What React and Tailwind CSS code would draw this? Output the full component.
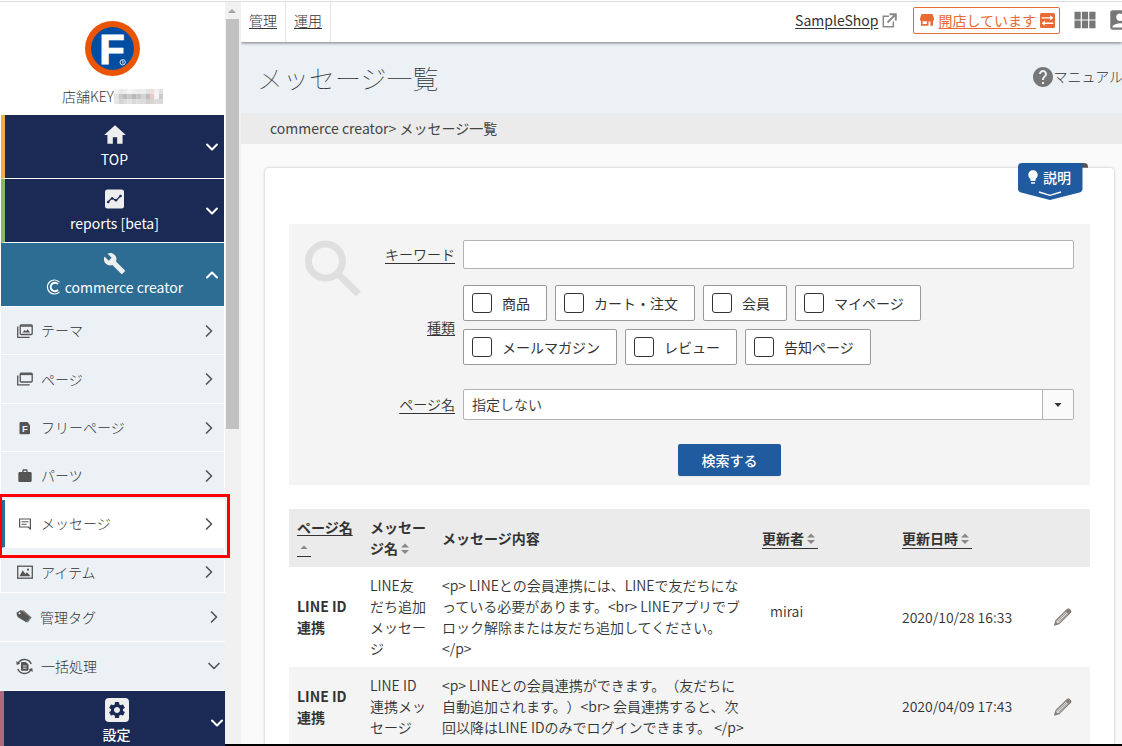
import React from "react";
import { ChevronDown, ChevronRight, ChevronUp } from "lucide-react";
import { MdAccountBox, MdBuild, MdHelp, MdHome, MdLightbulb, MdSettings, MdViewModule, MdWork } from "react-icons/md";

function Logo() {
  return (
    <svg className="size-[55px]" viewBox="0 0 54 54" aria-label="ロゴ">
      <circle cx="27" cy="27" r="27" fill="#ea5504" />
      <circle cx="27" cy="27" r="21" fill="#004ea2" />
      <text x="14" y="42" fontSize="41" fontWeight="700" fontFamily="Liberation Sans, sans-serif" fill="#fff" stroke="#fff" strokeWidth="1">F</text>
      <circle cx="37" cy="40.500" r="2.600" fill="none" stroke="#fff" strokeWidth=".8" />
      <path d="M36.200 39.300h1.600l-.8 1 .8 1h-1.600" fill="none" stroke="#fff" strokeWidth=".6" />
    </svg>
  );
}

const mosaic = [
  ["#f3f3f3", "#e9e9e9", "#eeeeee", "#f5f5f5", "#efefef", "#ececec", "#eeeeee", "#e3e3e3", "#f0dede", "#f2f2f2", "#dfdfdf"],
  ["#e4e4e4", "#c9c9c9", "#bcbcbc", "#c8c8c8", "#b9b9b9", "#c3c3c3", "#d2d2d2", "#bdbdbd", "#ecc8c8", "#f2f4f6", "#cbcbcb"],
  ["#e8e8e8", "#d6d6d6", "#dddddd", "#e3e3e3", "#d9d9d9", "#dddddd", "#dcdcdc", "#d0d0d0", "#d9d4d4", "#dcdcdc", "#d9d9d9"],
];

function MaskedKey() {
  return (
    <svg className="h-[15px] w-[49px]" viewBox="0 0 49 15" aria-label="非表示">
      {mosaic.map((row, r) => row.map((c, i) => <rect key={`${r}-${i}`} x={i * 4.5} y={r * 5} width="4.600" height="5" fill={c} />))}
    </svg>
  );
}

function ReportIcon() {
  return (
    <svg className="size-5" viewBox="0 0 20 20">
      <rect x="0" y="0.500" width="19" height="19" rx="2.500" fill="#eee" />
      <path d="M3 13l4-4 4 2.500 5-5" fill="none" stroke="#1b2a54" strokeWidth="1.200" />
      <g fill="#1b2a54"><circle cx="3.200" cy="13" r="1.300" /><circle cx="7.200" cy="9.500" r="1.300" /><circle cx="11" cy="11.200" r="1.300" /><circle cx="15.500" cy="7" r="1.300" /></g>
    </svg>
  );
}

function CreatorMark() {
  return (
    <svg className="h-4 w-[15px]" viewBox="0 0 15 16" fill="none" stroke="#fff">
      <path d="M13.500 3.200A7 7 0 1 0 13.500 12.800" strokeWidth="1.200" />
      <path d="M12 5.200A4.200 4.200 0 1 0 12 10.800" strokeWidth="1.900" />
    </svg>
  );
}

function ThemeIcon() {
  return (
    <svg className="size-4" viewBox="0 0 16 16" fill="none" stroke="#555">
      <path d="M.700 3.500v10.800h12" strokeWidth="1.300" />
      <rect x="3.200" y="1.800" width="12" height="9.700" rx="1" strokeWidth="1.300" />
      <path d="M3.200 3h12" strokeWidth="1.500" />
      <path d="M5.500 9.500l2-2.500 1.500 1.300 1.600-2 2.400 3.200z" fill="#555" stroke="none" />
    </svg>
  );
}

function PageIcon() {
  return (
    <svg className="size-4" viewBox="0 0 16 16" fill="none" stroke="#555">
      <path d="M.700 4.500v9.300h12" strokeWidth="1.300" />
      <rect x="3.200" y="2.200" width="12" height="8.800" rx="1" strokeWidth="1.300" />
      <path d="M3.200 3.200h12" strokeWidth="1.800" />
    </svg>
  );
}

function FreePageIcon() {
  return (
    <svg className="size-4" viewBox="0 0 16 16">
      <path d="M4 2h6.500L13 5.200V13a1.200 1.200 0 0 1-1.200 1.200H4A1.200 1.200 0 0 1 2.500 13V3.200A1.200 1.200 0 0 1 4 2z" fill="#555" />
      <text x="5" y="12" fontSize="9.500" fontWeight="700" fontFamily="Liberation Sans, sans-serif" fill="#ecf1f6">F</text>
    </svg>
  );
}

function MessageIcon() {
  return (
    <svg className="size-4" viewBox="0 0 16 16" fill="none" stroke="#555">
      <path d="M2.600 3h10.800v10.200l-2.200-2.200H2.600z" strokeWidth="1.200" strokeLinejoin="round" />
      <path d="M4.500 5.800h7M4.500 8.300h5" strokeWidth="1" />
    </svg>
  );
}

function ItemIcon() {
  return (
    <svg className="size-4" viewBox="0 0 16 16">
      <rect x=".700" y="2.200" width="14.600" height="12" fill="none" stroke="#555" strokeWidth="1.300" />
      <path d="M2.500 12.300l3.200-6 2.600 3.700 1.700-1.700 3.500 4z" fill="#555" />
      <circle cx="11" cy="5.700" r="1.100" fill="#555" />
    </svg>
  );
}

function TagIcon() {
  return (
    <svg className="size-4" viewBox="0 0 16 16">
      <path d="M1 5.500L4.300 1.300l3.500.3 7.900 6.800-3.900 5.200-1.500-.3-8.600-5z" fill="#777" />
      <path d="M.500 3.500L4.500 1.500 13.800 8.200l-3.600 4.900L1 6.800z" fill="#555" />
      <circle cx="3.600" cy="4.200" r="1" fill="#ecf1f6" />
    </svg>
  );
}

function BatchIcon() {
  return (
    <svg className="size-[17px]" viewBox="0 0 17 17" fill="none" stroke="#555">
      <path d="M2 5.500A7.300 7.300 0 0 1 15.200 6M15 11.500A7.300 7.300 0 0 1 1.800 11" strokeWidth="1.500" />
      <path d="M.300 3l.4 4 3.500-1.300zM16.700 14l-.4-4-3.500 1.300z" fill="#555" stroke="none" />
      <path d="M5.500 4.500h4.500l2 2v5.700H5.500z" fill="#555" stroke="#555" />
      <path d="M7 8h3.500M7 10.200h3.500" stroke="#ecf1f6" strokeWidth=".9" />
    </svg>
  );
}

function ExternalIcon() {
  return (
    <svg className="size-[15px]" viewBox="0 0 15 15" fill="none" stroke="#888" strokeWidth="1.500">
      <path d="M7 3.200H1.300v10.500h10V8.500" />
      <path d="M7.500 1.200h6.300v6.300M13.500 1.500L5.500 9.500" strokeWidth="1.900" />
    </svg>
  );
}

function ShopIcon() {
  return (
    <svg className="size-3.5" viewBox="0 0 14 14" fill="#e96a32">
      <path d="M1.500 1h11L14 5.500V7.500H0V5.500z" />
      <path d="M1 7h12v5.800h-2.600V8.500H8.500v4.300H1zM2.600 8.300v2.600h4.300V8.300z" fillRule="evenodd" />
    </svg>
  );
}

function SwapIcon() {
  return (
    <svg className="size-[15px]" viewBox="0 0 14 14">
      <rect width="14" height="14" rx="1.500" fill="#e96a32" />
      <path d="M1.500 4.500h9M3.500 9.500h9" stroke="#fff" strokeWidth="1.300" />
      <path d="M9.500 2l3 2.500-3 2.500zM4.500 7l-3 2.500 3 2.500z" fill="#fff" />
    </svg>
  );
}

function PencilIcon() {
  return (
    <svg className="size-[18px]" viewBox="0 0 18 18" fill="none" stroke="#857f7c" strokeLinejoin="round">
      <path d="M.800 17l1.200-4.500L13.300 1.500Q14.300.800 15.300 1.500L16.500 2.800Q17.100 3.700 16.300 4.500L5.100 15.600z" strokeWidth="1.200" fill="#e2e0de" />
      <path d="M3.500 13.200L13.600 3.600M4.600 14.300L14.600 4.700" strokeWidth=".7" />
      <path d="M12 2.800L13.800 1.200h1.500L16.800 3v1.200L15 5.800z" fill="#857f7c" />
      <path d="M.800 17l.8-3 2 2z" fill="#857f7c" />
    </svg>
  );
}

function SortIcon({ up }) {
  return (
    <svg className="inline-block h-3 w-3.5 align-[-1px]" viewBox="0 0 14 12" fill="#888">
      {up ? <path d="M3.500 6h7L7 2.500z" /> : <path d="M3 4.500h8L7 .500zM3 7h8L7 11z" />}
    </svg>
  );
}

function MainItem({ icon, label, stripe, up, current }) {
  return (
    <button aria-expanded={!!up} className={`relative flex h-16 w-full flex-col items-center border-b border-white pt-2 text-[14px] leading-5 font-normal text-white ${stripe} ${current ? "bg-[#2d6d94] pl-1" : "border-l-4 bg-[#1b2a54]"}`}>
      <span className="flex h-6 items-center text-[#eee]">{icon}</span>
      <span className="flex items-center gap-1 pt-0.5">{label}</span>
      {up ? <ChevronUp className="absolute top-[22px] right-0.5 size-5" strokeWidth={2.5} /> : <ChevronDown className="absolute top-[22px] right-0.5 size-5" strokeWidth={2.5} />}
    </button>
  );
}

function SubItem({ icon, label, height = "h-12", active, end = "pr-1.5", down }) {
  return (
    <a href="#" aria-current={active ? "page" : undefined} className={`flex shrink-0 items-center gap-2 border-b border-white text-[14px] font-light text-[#333] ${height} ${end} ${active ? "border-l-4 border-l-[#2d6d94] bg-white pl-3" : "bg-[#ecf1f6] pl-4"}`}>
      <span className="text-[#555]">{icon}</span>
      <span className="flex-1">{label}</span>
      <span className="flex w-[18px] justify-center text-[#555]">
        {down ? <ChevronDown className="size-5 shrink-0" strokeWidth={2} /> : <ChevronRight className="size-5 shrink-0" strokeWidth={2} />}
      </span>
    </a>
  );
}

function Sidebar() {
  return (
    <nav className="flex w-[225px] shrink-0 flex-col bg-white">
      <div className="flex h-[113px] shrink-0 flex-col items-center gap-2 pt-[19px] text-[#333]">
        <Logo />
        <div className="flex items-center text-[14px] leading-6 font-light">店舗KEY<MaskedKey /></div>
      </div>
      <div className="mr-px ml-px shrink-0">
        <MainItem icon={<MdHome className="size-[26px]" />} label="TOP" stripe="border-l-[#e8b04b]" />
        <MainItem icon={<ReportIcon />} label="reports [beta]" stripe="border-l-[#87b56a]" />
        <MainItem icon={<MdBuild className="size-[23px]" />} label={<><CreatorMark />commerce creator</>} stripe="" up current />
        <SubItem icon={<ThemeIcon />} label="テーマ" />
        <SubItem icon={<PageIcon />} label="ページ" height="h-[49px]" />
        <SubItem icon={<FreePageIcon />} label="フリーページ" />
        <SubItem icon={<MdWork className="size-4" />} label="パーツ" />
        <div className="relative">
          <SubItem icon={<MessageIcon />} label="メッセージ" active />
          <div className="pointer-events-none absolute -top-1.5 -right-1.5 -bottom-2.5 -left-px z-10 border-3 border-l-2 border-[#f00]" />
        </div>
        <SubItem icon={<ItemIcon />} label="アイテム" height="h-[45px] pt-1" />
      </div>
      <SubItem icon={<TagIcon />} label="管理タグ" height="h-[49px]" end="pr-0.5" />
      <SubItem icon={<BatchIcon />} label="一括処理" height="h-[49px]" end="pr-0.5" down />
      <button className="relative flex h-16 w-full shrink-0 flex-col items-center overflow-hidden border-l-4 border-[#b0687f] bg-[#1b2a54] pt-[7px] pl-1 text-[14px] leading-5 font-medium text-white">
        <span className="rounded-sm bg-[#eee] p-0.5 text-[#1b2a54]"><MdSettings className="size-5" /></span>
        <span className="pt-0.5">設定</span>
        <ChevronDown className="absolute top-[22px] -right-0.5 size-5" strokeWidth={2.5} />
      </button>
    </nav>
  );
}

function ScrollTrack() {
  return (
    <div className="flex w-4 shrink-0 flex-col items-center bg-[#f1f1f1] pr-0.5">
      <svg className="h-[17px] w-2" viewBox="0 0 8 17" fill="#a3a3a3"><path d="M0 11h8L4 7z" /></svg>
      <div className="h-[410px] w-[13px] bg-[#c1c1c1]" />
    </div>
  );
}

function TopBar() {
  return (
    <header className="relative z-10 flex h-10 shrink-0 items-center justify-between bg-white text-[14px] font-light text-[#333] shadow-[0_1px_3px_rgba(0,0,0,0.5)]">
      <div className="flex h-full">
        {["管理", "運用"].map((t) => (
          <a key={t} href="#" className="flex h-full items-center border-r border-[#e5e5e5] px-2 pb-1 underline underline-offset-2">{t}</a>
        ))}
      </div>
      <div className="-mr-2 flex shrink-0 items-center gap-4 pb-1">
        <a href="#" className="flex items-center gap-1 font-normal"><span className="underline underline-offset-2">SampleShop</span><ExternalIcon /></a>
        <div className="flex items-center gap-[15px]">
          <button className="flex h-[27px] items-center gap-1 rounded-xs border border-[#e96a32] px-1 pl-1.5 font-normal text-[#e96a32]">
            <ShopIcon /><span className="underline underline-offset-2">開店しています</span><SwapIcon />
          </button>
          <button aria-label="アプリ一覧" className="flex w-5 justify-center text-[#777]"><MdViewModule className="size-7 shrink-0" /></button>
          <button aria-label="アカウント" className="flex w-5 justify-center text-[#777]"><MdAccountBox className="size-[26px] shrink-0" /></button>
        </div>
      </div>
    </header>
  );
}

const kinds = ["商品", "カート・注文", "会員", "マイページ", "メールマガジン", "レビュー", "告知ページ"];

function SearchForm() {
  return (
    <form className="flex bg-[#f4f4f4] pt-4 pr-4 pb-[9px] pl-4 text-[14px] text-[#333]" onSubmit={(e) => e.preventDefault()}>
      <svg className="size-14 shrink-0" viewBox="0 0 56 56" fill="none" stroke="#dfdfdf" strokeWidth="7">
        <circle cx="20.500" cy="21" r="17" />
        <path d="M32 33L53.500 54" />
      </svg>
      <div className="min-w-0 flex-1">
        <div className="grid grid-cols-[94px_minmax(0,1fr)] items-center gap-x-2">
          <label htmlFor="kw" className="text-right font-[350] underline underline-offset-3">キーワード</label>
          <input id="kw" className="h-[29px] rounded-xs border border-[#b3b3b3] bg-white px-2 outline-none" />
          <span id="kind" className="pt-5 text-right font-[350] underline underline-offset-2">種類</span>
          <div role="group" aria-labelledby="kind" className="flex flex-wrap gap-2 pt-4">
            {kinds.map((k) => (
              <label key={k} className="flex h-9 items-center gap-2.5 rounded-xs border border-[#999] bg-white pr-4 pl-2 leading-5">
                <input type="checkbox" className="size-5 appearance-none rounded-[3px] border border-[#333] bg-white checked:bg-[#205ba0]" />
                <span>{k}</span>
              </label>
            ))}
          </div>
          <label htmlFor="page" className="pt-6 text-right font-[350] underline underline-offset-3">ページ名</label>
          <div className="relative mt-6">
            <select id="page" className="block h-[31px] w-full appearance-none rounded-xs border border-[#b3b3b3] bg-white px-2 font-[350]">
              <option>指定しない</option>
            </select>
            <div className="pointer-events-none absolute inset-y-px right-px flex w-[31px] items-center justify-center border-l border-[#b3b3b3] bg-[#fafafa]">
              <svg className="h-1 w-2" viewBox="0 0 8 4" fill="#333"><path d="M.500 0h7L4 4z" /></svg>
            </div>
          </div>
        </div>
        <div className="ml-6 flex justify-center pt-6">
          <button className="h-8 w-[103px] rounded-xs bg-[#205ba0] font-medium text-white shadow-xs">検索する</button>
        </div>
      </div>
    </form>
  );
}

const rows = [
  {
    name: "LINE友だち追加メッセージ",
    body: "<p> LINEとの会員連携には、LINEで友だちになっている必要があります。<br> LINEアプリでブロック解除または友だち追加してください。</p>",
    user: "mirai",
    date: "2020/10/28 16:33",
  },
  {
    name: "LINE ID連携メッセージ",
    body: "<p> LINEとの会員連携ができます。（友だちに自動追加されます。）<br> 会員連携すると、次回以降はLINE IDのみでログインできます。 </p>",
    user: "",
    date: "2020/04/09 17:43",
  },
];

function MessageTable() {
  return (
    <table className="mt-6 w-full table-fixed text-left text-[14px] leading-[21px] text-[#333] [text-spacing-trim:space-all]">
      <colgroup>
        <col className="w-[73px]" /><col className="w-[72px]" /><col /><col className="w-[140px]" /><col className="w-[152px]" /><col className="w-11" />
      </colgroup>
      <thead className="bg-[#ebebeb]">
        <tr>
          <th className="p-2 font-bold"><a href="#" className="underline underline-offset-2">ページ名 <span className="inline-block border-b border-[#333] leading-4"><SortIcon up /></span></a></th>
          <th className="p-2 font-bold">メッセージ名<SortIcon /></th>
          <th className="p-2 font-bold">メッセージ内容</th>
          <th className="p-2 font-bold"><a href="#" className="border-b border-[#333]">更新者<SortIcon /></a></th>
          <th className="p-2 font-bold"><a href="#" className="border-b border-[#333]">更新日時<SortIcon /></a></th>
          <th className="p-2"></th>
        </tr>
      </thead>
      <tbody>
        {rows.map((r) => (
          <tr key={r.date} className="even:bg-[#f4f4f4]">
            <th scope="row" className="p-2 font-bold">LINE ID<br />連携</th>
            <td className="p-2 font-[350]">{r.name}</td>
            <td className="p-2 font-[350]">{r.body}</td>
            <td className="px-4 pb-3 font-[350]">{r.user}</td>
            <td className="p-2 font-[350]">{r.date}</td>
            <td className="p-2"><button aria-label="編集" className="block"><PencilIcon /></button></td>
          </tr>
        ))}
      </tbody>
    </table>
  );
}

function HelpBadge() {
  return (
    <button className="absolute -top-[5px] right-[26px] flex h-[37px] w-[70px] items-start text-[14px] font-medium text-white">
      <svg className="absolute inset-0 size-full" viewBox="0 0 70 37">
        <path d="M60 0h6a4 4 0 0 1 4 4v.8H60z" fill="#555" />
        <path d="M4 0H64.500V25.500Q64.500 28.500 61.500 29.500L32 37 3 29.500Q0 28.500 0 25.500V4Q0 0 4 0z" fill="#205ba0" />
        <path d="M21 29l11 3.300L43 29" fill="none" stroke="#fff" strokeWidth="1.400" />
      </svg>
      <span className="relative flex items-center gap-0.5 pt-0.5 pl-[7px] leading-6"><MdLightbulb className="size-4" />説明</span>
    </button>
  );
}

export default function App() {
  return (
    <div className="flex h-screen flex-col overflow-hidden border-t border-white bg-white font-['Noto_Sans_CJK_JP',sans-serif]">
      <div className="flex min-h-0 flex-1 border-t border-[#ddd]">
        <Sidebar />
        <div className="flex min-w-0 flex-1 flex-col">
          <div className="flex min-h-0 flex-1">
            <ScrollTrack />
            <main className="flex min-w-0 flex-1 flex-col overflow-hidden bg-[#fafafa]">
              <TopBar />
              <div className="flex h-[71px] shrink-0 items-center justify-between bg-[#ecf1f6] pl-4">
                <h1 className="text-[26px] leading-9 font-thin text-[#333]">メッセージ一覧</h1>
                <a href="#" className="-mr-px flex items-center pb-0.5 text-[14px] font-light text-[#333]">
                  <span className="flex w-5 justify-center text-[#777]"><MdHelp className="size-6 shrink-0" /></span>マニュアル
                </a>
              </div>
              <div className="flex h-[31px] shrink-0 items-center bg-[#ebebeb] pl-[29px] text-[14px] font-normal text-[#444]">commerce creator&gt; メッセージ一覧</div>
              <section className="relative mt-6 mr-2 ml-6 shrink-0 rounded-sm bg-white px-6 pt-14 shadow-[0_0_3px_rgba(0,0,0,0.25)]">
                <HelpBadge />
                <SearchForm />
                <MessageTable />
              </section>
            </main>
          </div>
          <div className="h-0.5 shrink-0 bg-black" />
        </div>
      </div>
    </div>
  );
}
